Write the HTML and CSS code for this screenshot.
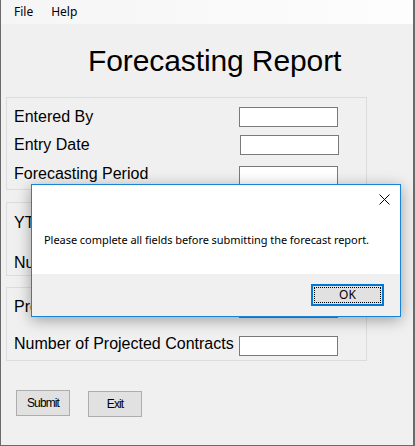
FILE: index.html
```html
<!DOCTYPE html>
<html>
<head>
<meta charset="utf-8">
<link rel="stylesheet" href="styles.css">
</head>
<body>
<div class="window">
  <div class="menubar">
    <span class="menu-item file">File</span>
    <span class="menu-item help">Help</span>
  </div>
  <h1 class="title">Forecasting Report</h1>
  <div class="groups">
    <div class="group g1">
      <div class="row"><span class="label">Entered By</span><span class="textbox"></span></div>
      <div class="row r2"><span class="label">Entry Date</span><span class="textbox shift1"></span></div>
      <div class="row r3"><span class="label lift2">Forecasting Period</span><span class="textbox"></span></div>
    </div>
    <div class="group g2">
      <div class="row"><span class="label">YTD Contracts</span><span class="textbox"></span></div>
      <div class="row r2b"><span class="label">Number of Contracts</span><span class="textbox"></span></div>
    </div>
    <div class="group g3">
      <div class="row"><span class="label lift1">Projected Revenue</span><span class="textbox"></span></div>
      <div class="row r2c"><span class="label lift2">Number of Projected Contracts</span><span class="textbox"></span></div>
    </div>
  </div>
  <div class="buttons">
    <button class="btn submit">Submit</button>
    <button class="btn exit">Exit</button>
  </div>

  <div class="dialog">
    <div class="dialog-body">
      <div class="dialog-top">
        <svg class="close" width="11" height="11" viewBox="0 0 11 11"><path d="M0.5 0.5 L10.5 10.5 M10.5 0.5 L0.5 10.5" stroke="#000" stroke-width="1" fill="none"/></svg>
      </div>
      <p class="message">Please complete all fields before submitting the forecast report.</p>
    </div>
    <div class="dialog-footer">
      <button class="ok"><span class="focus">OK</span></button>
    </div>
  </div>
</div>
</body>
</html>
```
FILE: styles.css
```css
* { box-sizing: border-box; }
html, body { margin: 0; padding: 0; }
body { width: 415px; height: 446px; overflow: hidden; background: #f0f0f0; }

.window {
  position: relative;
  width: 415px;
  height: 446px;
  background: #f0f0f0;
  border-left: 1px solid #6a6a6a;
  border-right: 2px solid #6a6a6a;
  border-bottom: 1px solid #6a6a6a;
  font-family: "Liberation Sans", Arial, sans-serif;
  color: #000;
}

.menubar {
  height: 24px;
  background: linear-gradient(to right, #f5f5f5, #fdfdfd);
  display: flex;
  align-items: center;
  font-family: "Noto Sans", sans-serif;
  font-size: 12px;
  padding-left: 13px;
}
.menu-item { line-height: 16px; }
.help { margin-left: 18px; }

.title {
  margin: 20px 0 0 87px;
  font-weight: normal;
  font-size: 30px;
  line-height: 34px;
  height: 34px;
  letter-spacing: -0.1px;
}

.groups {
  margin-top: 19px;
  padding-left: 5px;
  display: flex;
  flex-direction: column;
}
.group {
  width: 361px;
  border: 1px solid #dcdcdc;
  padding-left: 7px;
}
.g1 { height: 93px; padding-top: 9px; }
.g2 { height: 74px; margin-top: 12px; padding-top: 10px; }
.g3 { height: 74px; margin-top: 11px; padding-top: 10px; }

.row {
  display: flex;
  align-items: center;
  height: 20px;
}
.r2 { margin-top: 8px; }
.r3 { margin-top: 11px; }
.r2b { margin-top: 20px; }
.r2c { margin-top: 18px; }

.label {
  width: 225px;
  font-size: 16px;
  line-height: 18px;
  white-space: nowrap;
}
.lift1 { margin-bottom: 2px; }
.lift2 { margin-bottom: 4px; }

.textbox {
  width: 99px;
  height: 20px;
  background: #fff;
  border: 1px solid #7a7a7a;
}
.shift1 { margin-left: 1px; }

.buttons {
  display: flex;
  align-items: flex-start;
  margin-top: 29px;
  padding-left: 15px;
}
.btn {
  width: 54px;
  height: 26px;
  background: #e1e1e1;
  border: 1px solid #adadad;
  font-family: "Liberation Sans", Arial, sans-serif;
  font-size: 12px;
  letter-spacing: -0.9px;
  color: #000;
  padding: 0;
  margin: 0;
}
.exit { margin-left: 18px; margin-top: 1px; }

.dialog {
  position: absolute;
  left: 30px;
  top: 184px;
  width: 370px;
  height: 133px;
  border: 1px solid #1883d7;
  background: #fff;
  box-shadow: 0 3px 14px rgba(0, 0, 0, 0.35);
  display: flex;
  flex-direction: column;
}
.dialog-body {
  height: 89px;
  background: #fff;
  padding: 9px 10px 0 12px;
}
.dialog-top {
  display: flex;
  justify-content: flex-end;
  height: 11px;
}
.close { display: block; }
.message {
  margin: 27px 0 0 0;
  font-family: "Noto Sans", sans-serif;
  font-size: 11px;
  line-height: 15px;
  letter-spacing: -0.05px;
  white-space: nowrap;
}
.dialog-footer {
  flex: 1;
  background: #f0f0f0;
  padding: 10px 0 0 279px;
}
.ok {
  width: 73px;
  height: 22px;
  border: 2px solid #0078d7;
  background: #e1e1e1;
  padding: 1px;
  margin: 0;
  display: flex;
}
.focus {
  flex: 1;
  border: 1px dotted #000;
  font-family: "Noto Sans", sans-serif;
  font-size: 12px;
  line-height: 14px;
  color: #000;
  display: flex;
  align-items: center;
  justify-content: center;
}
```
